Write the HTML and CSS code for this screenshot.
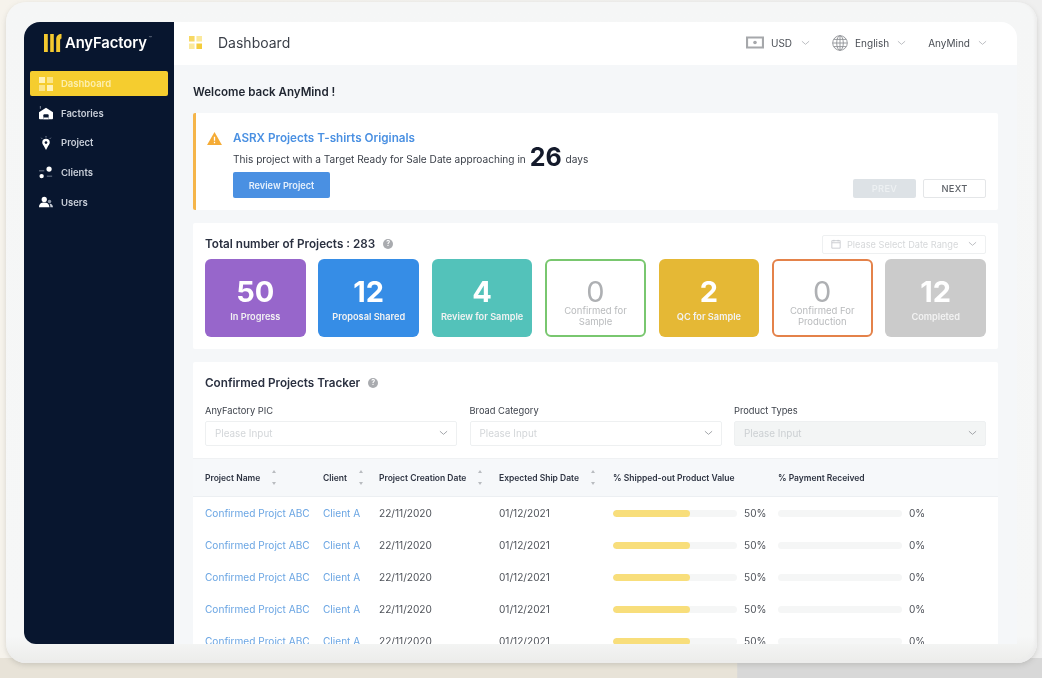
FILE: index.html
```html
<!DOCTYPE html>
<html lang="en">
<head>
<meta charset="utf-8">
<title>AnyFactory Dashboard</title>
<link rel="stylesheet" href="styles.css">
</head>
<body>
<div class="backdrop">
<div class="device">
<div class="app">
  <aside class="sidebar">
    <div class="logo">
      <svg class="logo-mark" viewBox="0 0 18 18"><path d="M0 0h3.800v18H0zM6.200 0h3.600v18H6.200zM12.200 18V5c0-3 2-5 5.300-5v4.500c-1 .3-1.400.8-1.400 2V18z" fill="#f4c92f"/></svg>
      <span class="logo-text">AnyFactory</span><span class="tm">™</span>
    </div>
    <nav class="nav">
      <a class="nav-item active">
        <svg class="nav-icon" viewBox="0 0 14 14"><path d="M0 0h6v6H0z" fill="#fff2b8"/><path d="M8 0h6v6H8zM0 8h6v6H0z" fill="#fbe58a"/><path d="M8 8h6v6H8z" fill="#fff2b8"/></svg>
        <span>Dashboard</span>
      </a>
      <a class="nav-item">
        <svg class="nav-icon" viewBox="0 0 16 16"><path d="M1 15a1 1 0 0 1-1-1V7l8-5 8 5v7a1 1 0 0 1-1 1z" fill="#fff"/><path d="M5 15v-4.500a1 1 0 0 1 1-1h4a1 1 0 0 1 1 1V15z" fill="#08162f"/><path d="M5 13h6v2H5z" fill="#fff"/><path d="M1 0h1v3H1z" fill="#8d97a8"/></svg>
        <span>Factories</span>
      </a>
      <a class="nav-item">
        <svg class="nav-icon" viewBox="0 0 16 16"><path d="M8 3a4.300 4.300 0 0 0-4.300 4.300c0 2 1.600 3 2.300 5L8 16l2-3.700c.7-2 2.300-3 2.300-5A4.300 4.300 0 0 0 8 3z" fill="#fff"/><circle cx="8" cy="7.500" r="1.500" fill="#08162f"/><path d="M8 0v1.800M2.500 2l1.200 1.300M13.500 2l-1.200 1.300" stroke="#8d97a8" fill="none"/></svg>
        <span>Project</span>
      </a>
      <a class="nav-item">
        <svg class="nav-icon" viewBox="0 0 16 16"><circle cx="11.500" cy="3.500" r="3" fill="#fff"/><circle cx="3" cy="11.500" r="2.500" fill="#fff"/><path d="M0 5h6v1H0zM9 11h6v1H9z" fill="#8d97a8"/></svg>
        <span>Clients</span>
      </a>
      <a class="nav-item">
        <svg class="nav-icon" viewBox="0 0 16 16"><circle cx="6" cy="5" r="3" fill="#fff"/><path d="M0 14c0-4 2.500-5.500 6-5.500s5.500 1.500 6 5.500z" fill="#fff"/><circle cx="12" cy="7.500" r="2" fill="#8d97a8"/><path d="M13 14c0-2-.4-3-1-4 2-.4 3.800.9 4 4z" fill="#c8ced8"/></svg>
        <span>Users</span>
      </a>
    </nav>
  </aside>
  <div class="main">
    <header class="topbar">
      <svg class="page-icon" viewBox="0 0 14 14"><path d="M0 0h6v6H0z" fill="#f7d863"/><path d="M8 0h6v6H8zM0 8h6v6H0z" fill="#fbe99c"/><path d="M8 8h6v6H8z" fill="#f4cd3c"/></svg>
      <h1 class="page-title">Dashboard</h1>
      <div class="top-actions">
        <div class="top-item item-usd">
          <svg class="cash-icon" viewBox="0 0 18 13"><path d="M1 1.500h16v10H1z" fill="none" stroke="#a6a8ab" stroke-width="2.200"/><circle cx="9" cy="6.500" r="1.800" fill="#a6a8ab"/></svg>
          <span>USD</span>
          <svg class="chev" viewBox="0 0 10 6"><path d="M1 1l4 3.500L9 1" fill="none" stroke="#b5b8bc" stroke-width="1"/></svg>
        </div>
        <div class="top-item item-lang">
          <svg class="globe-icon" viewBox="0 0 16 16"><g fill="none" stroke="#8f9296" stroke-width=".9"><circle cx="8" cy="8" r="7.300"/><ellipse cx="8" cy="8" rx="3.300" ry="7.300"/><path d="M8 .7v14.600M.7 8h14.600M1.800 4.400h12.400M1.800 11.600h12.400"/></g></svg>
          <span>English</span>
          <svg class="chev" viewBox="0 0 10 6"><path d="M1 1l4 3.500L9 1" fill="none" stroke="#b5b8bc" stroke-width="1"/></svg>
        </div>
        <div class="top-item item-user">
          <span>AnyMind</span>
          <svg class="chev" viewBox="0 0 10 6"><path d="M1 1l4 3.500L9 1" fill="none" stroke="#b5b8bc" stroke-width="1"/></svg>
        </div>
      </div>
    </header>
    <main class="content">
      <h2 class="welcome">Welcome back AnyMind !</h2>
      <section class="alert">
        <svg class="warn" viewBox="0 0 16 14"><path d="M8 0l8 14H0z" fill="#f5ab35"/><path d="M7.300 5h1.400v4.500H7.300zM7.300 10.500h1.400V12H7.300z" fill="#fff"/></svg>
        <div class="alert-body">
          <a class="alert-title">ASRX Projects T-shirts Originals</a>
          <p class="alert-text">This project with a Target Ready for Sale Date approaching in <b class="days-num">26</b> days</p>
          <button class="btn-review">Review Project</button>
        </div>
        <div class="pager">
          <button class="btn-page prev">PREV</button>
          <button class="btn-page next">NEXT</button>
        </div>
      </section>
      <section class="card stats">
        <div class="stats-head">
          <h3 class="card-title">Total number of Projects : 283</h3>
          <span class="help">?</span>
          <div class="date-range">
            <svg class="cal" viewBox="0 0 12 12"><path d="M1 2h10v9H1zM1 4.500h10M3.500 1v2M8.500 1v2" fill="none" stroke="#c4c7cb"/></svg>
            <span>Please Select Date Range</span>
            <svg class="chev" viewBox="0 0 10 6"><path d="M1 1l4 3.500L9 1" fill="none" stroke="#b5b8bc" stroke-width="1"/></svg>
          </div>
        </div>
        <div class="tiles">
          <div class="tile t-purple"><b class="tile-num">50</b><span class="tile-label">In Progress</span></div>
          <div class="tile t-blue"><b class="tile-num">12</b><span class="tile-label">Proposal Shared</span></div>
          <div class="tile t-teal"><b class="tile-num">4</b><span class="tile-label">Review for Sample</span></div>
          <div class="tile outline o-green"><span class="tile-num">0</span><span class="tile-label">Confirmed for Sample</span></div>
          <div class="tile t-gold"><b class="tile-num">2</b><span class="tile-label">QC for Sample</span></div>
          <div class="tile outline o-orange"><span class="tile-num">0</span><span class="tile-label">Confirmed For Production</span></div>
          <div class="tile t-grey"><b class="tile-num">12</b><span class="tile-label">Completed</span></div>
        </div>
      </section>
      <section class="card tracker">
        <div class="tracker-head">
          <h3 class="card-title">Confirmed Projects Tracker</h3>
          <span class="help">?</span>
        </div>
        <div class="filters">
          <div class="filter"><label>AnyFactory PIC</label><div class="select"><span>Please Input</span><svg class="chev" viewBox="0 0 10 6"><path d="M1 1l4 3.500L9 1" fill="none" stroke="#9a9da1" stroke-width="1"/></svg></div></div>
          <div class="filter"><label>Broad Category</label><div class="select"><span>Please Input</span><svg class="chev" viewBox="0 0 10 6"><path d="M1 1l4 3.500L9 1" fill="none" stroke="#9a9da1" stroke-width="1"/></svg></div></div>
          <div class="filter"><label>Product Types</label><div class="select disabled"><span>Please Input</span><svg class="chev" viewBox="0 0 10 6"><path d="M1 1l4 3.500L9 1" fill="none" stroke="#9a9da1" stroke-width="1"/></svg></div></div>
        </div>
        <div class="table">
          <div class="row head">
            <div class="th">Project Name<span class="sort"></span></div>
            <div class="th">Client<span class="sort"></span></div>
            <div class="th">Project Creation Date<span class="sort"></span></div>
            <div class="th">Expected Ship Date<span class="sort"></span></div>
            <div class="th">% Shipped-out Product Value</div>
            <div class="th">% Payment Received</div>
          </div>
          <div class="row"><a class="link">Confirmed Projct ABC</a><a class="link">Client A</a><span>22/11/2020</span><span>01/12/2021</span><div class="progress"><div class="track"><div class="fill"></div></div><span>50%</span></div><div class="progress"><div class="track"></div><span>0%</span></div></div>
          <div class="row"><a class="link">Confirmed Projct ABC</a><a class="link">Client A</a><span>22/11/2020</span><span>01/12/2021</span><div class="progress"><div class="track"><div class="fill"></div></div><span>50%</span></div><div class="progress"><div class="track"></div><span>0%</span></div></div>
          <div class="row"><a class="link">Confirmed Projct ABC</a><a class="link">Client A</a><span>22/11/2020</span><span>01/12/2021</span><div class="progress"><div class="track"><div class="fill"></div></div><span>50%</span></div><div class="progress"><div class="track"></div><span>0%</span></div></div>
          <div class="row"><a class="link">Confirmed Projct ABC</a><a class="link">Client A</a><span>22/11/2020</span><span>01/12/2021</span><div class="progress"><div class="track"><div class="fill"></div></div><span>50%</span></div><div class="progress"><div class="track"></div><span>0%</span></div></div>
          <div class="row"><a class="link">Confirmed Projct ABC</a><a class="link">Client A</a><span>22/11/2020</span><span>01/12/2021</span><div class="progress"><div class="track"><div class="fill"></div></div><span>50%</span></div><div class="progress"><div class="track"></div><span>0%</span></div></div>
        </div>
      </section>
    </main>
  </div>
</div>
</div>
</div>
</body>
</html>
```
FILE: styles.css
```css
* { box-sizing: border-box; }
html, body { margin: 0; height: 100%; overflow: hidden; background: #f3f1ea; }
body {
  font-family: Inter, "Liberation Sans", sans-serif;
  color: #2b3240;
}
.backdrop {
  height: 678px;
  padding: 2px 5px 15px 6px;
  background:
    linear-gradient(90deg, #e8e3d8 0, #e8e3d8 70.700%, #d8d8d8 70.800%, #d8d8d8 100%) bottom / 100% 20px no-repeat,
    linear-gradient(90deg, #f6f3ec 0, #f2f1ee 50%, #efefef 100%);
  filter: blur(.35px);
}
.device {
  height: 100%;
  padding: 20px 20px 19px 18px;
  background: linear-gradient(180deg, #f5f6f6 0, #f6f7f7 96%, #ececea 100%);
  border-radius: 20px;
  box-shadow: 0 2px 5px rgba(120, 120, 110, .25), inset -2px -2px 3px #ececec;
}
.app {
  height: 100%;
  display: flex;
  background: #f5f7f9;
  border-radius: 16px 16px 0 12px;
  overflow: hidden;
}
.sidebar {
  flex: 0 0 150px;
  background: #08162f;
  padding: 0 6px;
}
.logo {
  height: 49px;
  display: flex;
  align-items: center;
  padding: 0 0 8px 14px;
  gap: 3px;
  color: #fff;
}
.logo-mark { width: 18px; height: 18px; }
.logo-text { font-size: 14.800px; font-weight: 600; letter-spacing: -.1px; }
.tm { font-size: 5px; align-self: flex-start; margin: 13px 0 0 -1px; color: #9aa2af; }
.nav { display: flex; flex-direction: column; gap: 4.700px; }
.nav-item {
  height: 25px;
  display: flex;
  align-items: center;
  gap: 8px;
  padding-left: 9px;
  font-size: 9.500px;
  font-weight: 600;
  color: #c8ced8;
  border-radius: 2px;
}
.nav-item.active { background: #f5cd2f; color: #fcefb0; }
.nav-icon { width: 14px; height: 14px; flex: none; }
.main { flex: 1; min-width: 0; display: flex; flex-direction: column; }
.topbar {
  flex: 0 0 43px;
  background: #fff;
  display: flex;
  align-items: center;
  padding: 0 30px 2px 15px;
}
.page-icon { width: 13px; height: 13px; }
.page-title { margin: 0 0 0 16px; font-size: 14px; font-weight: 400; color: #3a3f48; }
.top-actions { margin-left: auto; display: flex; align-items: center; }
.top-item { display: flex; align-items: center; font-size: 10px; color: #4a4e55; }
.item-usd { gap: 7px; margin-right: 22px; }
.item-usd .chev { margin-left: 2px; }
.item-lang { gap: 7px; margin-right: 22px; }
.item-lang .chev { margin-left: 1px; }
.item-user { gap: 8px; }
.cash-icon { width: 18px; height: 13px; }
.globe-icon { width: 16px; height: 16px; }
.chev { width: 9px; height: 6px; flex: none; }
.content {
  flex: 1;
  min-height: 0;
  overflow: hidden;
  padding: 0 19px;
}
.welcome { margin: 20px 0 14px; font-size: 11.600px; line-height: 14px; font-weight: 600; color: #1f2530; }
.alert {
  height: 97px;
  background: #fff;
  border-left: 3px solid #f5b54a;
  border-radius: 2px;
  display: flex;
  padding: 18px 12px 12px 11px;
}
.warn { width: 15px; height: 13px; margin-top: 1px; flex: none; }
.alert-body { margin-left: 11px; }
.alert-title { display: block; font-size: 11.700px; line-height: 15px; font-weight: 600; color: #4a90e2; }
.alert-text { margin: 0; font-size: 10.150px; height: 26px; line-height: 26px; color: #3a3f48; white-space: nowrap; }
.days-num { font-size: 25px; font-weight: 700; color: #141a2b; vertical-align: -3px; line-height: 20px; margin: 0 1px; }
.btn-review {
  display: block;
  width: 97px;
  height: 26px;
  margin-top: 0;
  border: 0;
  border-radius: 2px;
  background: #4a90e2;
  color: #e6f0fc;
  font: 600 9.200px Inter, sans-serif;
}
.pager { margin-left: auto; align-self: flex-end; display: flex; gap: 7px; }
.btn-page {
  width: 63px;
  height: 19px;
  border-radius: 2px;
  font: 500 9.300px Inter, sans-serif;
  letter-spacing: .3px;
  padding: 0;
}
.prev { background: #dde2e6; border: 0; color: #eef1f3; }
.next { background: #fff; border: 1px solid #e4e6e8; color: #5c6066; }
.card { background: #fff; border-radius: 2px; }
.stats { margin-top: 13px; height: 126px; padding: 10px 12px 12px; }
.stats-head { height: 22px; margin-bottom: 4px; display: flex; align-items: center; }
.card-title { margin: 0; font-size: 11.700px; font-weight: 600; color: #2a3040; }
.help {
  width: 10px; height: 10px;
  margin-left: 8px;
  border-radius: 50%;
  background: #a9abaf;
  color: #fff;
  font-size: 7px;
  font-weight: 700;
  line-height: 10px;
  text-align: center;
}
.date-range {
  margin-left: auto;
  width: 164px;
  height: 19px;
  display: flex;
  align-items: center;
  gap: 6px;
  padding: 0 8px;
  border: 1px solid #eef0f1;
  border-radius: 2px;
  font-size: 9.200px;
  color: #d6d8da;
  white-space: nowrap;
}
.date-range .chev { margin-left: auto; }
.cal { width: 10px; height: 10px; }
.tiles {
  margin-top: 0;
  display: grid;
  grid-template-columns: repeat(7, 1fr);
  gap: 12.700px;
}
.tile {
  height: 78px;
  border-radius: 6px;
  color: #fff;
  display: flex;
  flex-direction: column;
  align-items: center;
  padding: 15px 3px 0;
  text-align: center;
}
.tile-num { font-size: 29px; line-height: 35px; font-weight: 700; }
.tile-label { font-size: 9.200px; line-height: 11px; font-weight: 600; color: #f2f2f2; margin-top: 2px; white-space: nowrap; }
.t-purple { background: #9766cb; }
.t-blue { background: #368de6; }
.t-teal { background: #53c2ba; }
.t-gold { background: #e5b835; }
.t-grey { background: #cbcbcb; }
.outline { background: #fff; border: 2px solid; padding-top: 17px; }
.outline .tile-num { font-weight: 400; line-height: 27px; color: #aeb0b3; }
.outline .tile-label { font-size: 9.500px; font-weight: 400; color: #b9bbbd; white-space: normal; margin-top: 0; padding: 0 10px; }
.o-green { border-color: #79c76f; }
.o-orange { border-color: #e4824a; }
.tracker { margin-top: 13px; height: 290px; overflow: hidden; }
.tracker-head { height: 41px; padding: 0 12px; display: flex; align-items: center; }
.filters {
  padding: 0 12px;
  display: grid;
  grid-template-columns: repeat(3, 1fr);
  gap: 12.500px;
  margin-top: 0;
}
.filter label { display: block; font-size: 9.300px; line-height: 16px; color: #3e434c; }
.select {
  height: 25px;
  margin-top: 2px;
  display: flex;
  align-items: center;
  justify-content: space-between;
  padding: 0 8px 1px 9px;
  border: 1px solid #eef0f1;
  border-radius: 2px;
  font-size: 9.900px;
  color: #d3d6d9;
}
.select.disabled { background: #f3f5f5; color: #ccd0d3; }
.table { margin-top: 12px; }
.row {
  height: 32px;
  display: grid;
  grid-template-columns: 118px 56px 120px 114px 165px 1fr;
  align-items: center;
  padding-left: 12px;
  font-size: 10.100px;
  color: #50545b;
}
.row.head {
  height: 39px;
  background: #f6f8fa;
  border-top: 1px solid #eff1f3;
  border-bottom: 1px solid #eceff2;
}
.th { display: flex; align-items: center; font-size: 8.500px; font-weight: 600; color: #2e3442; white-space: nowrap; }
.sort { position: relative; width: 6px; height: 15px; margin-left: 12px; }
.sort::before, .sort::after {
  content: "";
  position: absolute;
  left: 0;
  border-left: 2.500px solid transparent;
  border-right: 2.500px solid transparent;
}
.sort::before { top: 0; border-bottom: 3px solid #b9bcc0; }
.sort::after { bottom: 0; border-top: 3px solid #b9bcc0; }
.link { color: #6aa5e3; }
.progress { display: flex; align-items: center; gap: 7px; }
.track { width: 124px; height: 7px; background: #f5f6f6; border-radius: 4px; overflow: hidden; flex: none; }
.fill { width: 62%; height: 100%; background: #f8de7b; border-radius: 4px; }
```
